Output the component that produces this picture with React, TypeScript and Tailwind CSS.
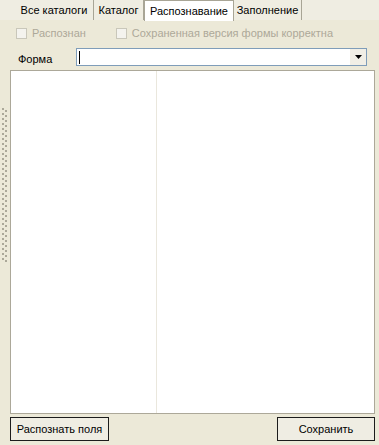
import React from 'react';

const tabs = [
  { label: 'Все каталоги', w: 'w-[79px]', active: false },
  { label: 'Каталог', w: 'w-[50px]', active: false },
  { label: 'Распознавание', w: 'w-[90px]', active: true },
  { label: 'Заполнение', w: 'w-[68px]', active: false },
];

const Grip: React.FC = () => (
  <svg width="8" height="155" className="block">
    <defs>
      <pattern id="dots" width="8" height="5" patternUnits="userSpaceOnUse">
        <rect x="1" y="0" width="2" height="2" fill="#ABA899" />
        <rect x="4" y="2" width="2" height="2" fill="#ABA899" />
      </pattern>
    </defs>
    <rect width="8" height="155" fill="url(#dots)" />
  </svg>
);

const Checkbox: React.FC<{ label: string }> = ({ label }) => (
  <div className="flex items-center gap-[5px]">
    <div className="w-[11px] h-[11px] border border-[#C9C7BA] bg-[#F4F3EE]" />
    <span className="text-[#ACA899]">{label}</span>
  </div>
);

const App: React.FC = () => {
  return (
    <div
      className="w-[379px] h-[445px] bg-[#ECE9D8] flex flex-col text-[11px] text-black overflow-hidden"
      style={{ fontFamily: '"Liberation Sans", Arial, sans-serif' }}
    >
      {/* tabs */}
      <div className="h-[21px] flex items-end pl-[15px] border-b border-[#ECE9D8] bg-[#EFEDE2]">
        {tabs.map((t) => (
          <div
            key={t.label}
            className={
              t.active
                ? `${t.w} h-[21px] bg-white border-x border-t border-[#A8A596] flex items-center justify-center leading-none -mb-px`
                : `${t.w} h-[20px] border-r border-[#A8A596] flex items-center justify-center leading-none`
            }
          >
            {t.label}
          </div>
        ))}
      </div>

      {/* checkbox row */}
      <div className="flex items-center h-[22px] mt-px pl-[16px] gap-[30px]">
        <Checkbox label="Распознан" />
        <Checkbox label="Сохраненная версия формы корректна" />
      </div>

      {/* form row */}
      <div className="flex items-center h-[18px] mt-[4px] pl-[18px]">
        <span className="w-[58px] pt-[5px]">Форма</span>
        <div className="w-[291px] h-[18px] border border-[#7F9DB9] bg-white flex items-stretch">
          <div className="flex-1 flex items-center pl-[2px]">
            <div className="w-px h-[13px] bg-black" />
          </div>
          <div className="w-[16px] bg-[#F1EFE6] flex items-center justify-center">
            <svg width="7" height="4" viewBox="0 0 7 4">
              <path d="M0 0h7L3.5 4z" fill="#000" />
            </svg>
          </div>
        </div>
      </div>

      {/* main area */}
      <div className="flex flex-1 mt-[4px]">
        <div className="w-[10px] pl-[1px] pt-[38px]">
          <Grip />
        </div>
        <div className="flex-1 mr-[4px] flex border border-[#ACA899] bg-white">
          <div className="w-[146px] border-r border-[#EAE7DD]" />
          <div className="flex-1" />
        </div>
      </div>

      {/* buttons */}
      <div className="flex justify-between h-[24px] mt-[3px] mb-[4px] pl-[10px] pr-[4px]">
        <button className="w-[99px] h-[24px] border border-[#1C1C1C] bg-[#EFEDE3] text-[11px] leading-none">
          Распознать поля
        </button>
        <button className="w-[98px] h-[24px] border border-[#1C1C1C] bg-[#EFEDE3] text-[11px] leading-none">
          Сохранить
        </button>
      </div>
    </div>
  );
};

export default App;
